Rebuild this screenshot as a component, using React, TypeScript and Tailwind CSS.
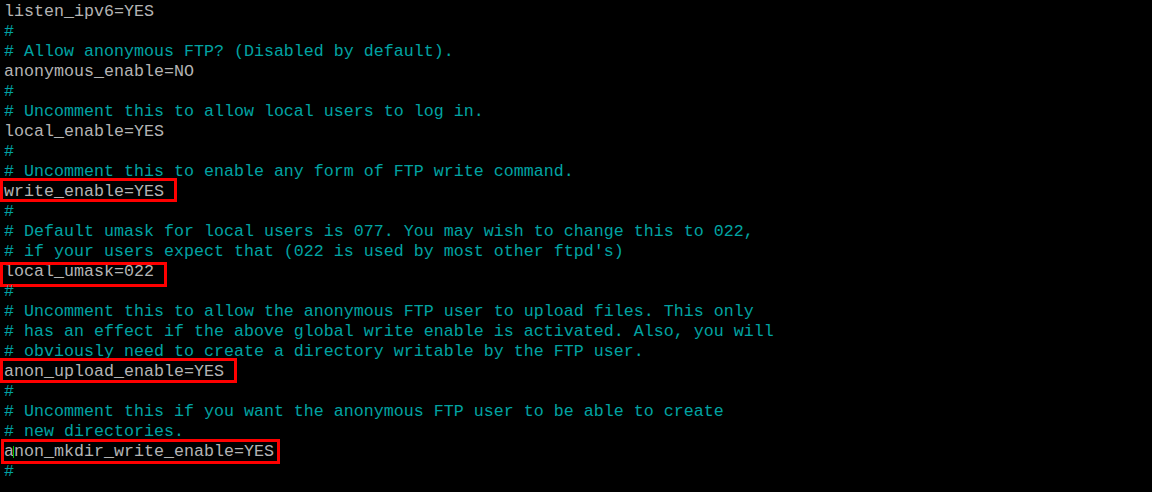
import React from "react";

type Line = {
  text: string;
  box?: { top: number; left: number; width: number; height: number };
  cursor?: boolean;
};

const lines: Line[] = [
  { text: "listen_ipv6=YES" },
  { text: "#" },
  { text: "# Allow anonymous FTP? (Disabled by default)." },
  { text: "anonymous_enable=NO" },
  { text: "#" },
  { text: "# Uncomment this to allow local users to log in." },
  { text: "local_enable=YES" },
  { text: "#" },
  { text: "# Uncomment this to enable any form of FTP write command." },
  { text: "write_enable=YES", box: { top: -2, left: 0, width: 177, height: 24 } },
  { text: "#" },
  { text: "# Default umask for local users is 077. You may wish to change this to 022," },
  { text: "# if your users expect that (022 is used by most other ftpd's)" },
  { text: "local_umask=022", box: { top: 2, left: 0, width: 167, height: 25 } },
  { text: "#" },
  { text: "# Uncomment this to allow the anonymous FTP user to upload files. This only" },
  { text: "# has an effect if the above global write enable is activated. Also, you will" },
  { text: "# obviously need to create a directory writable by the FTP user." },
  { text: "anon_upload_enable=YES", box: { top: -2, left: 0, width: 237, height: 25 } },
  { text: "#" },
  { text: "# Uncomment this if you want the anonymous FTP user to be able to create" },
  { text: "# new directories." },
  { text: "anon_mkdir_write_enable=YES", box: { top: -1, left: 1, width: 279, height: 25 }, cursor: true },
  { text: "#" },
];

export default function App() {
  return (
    <div className="w-[1152px] h-[492px] bg-black overflow-hidden pl-[4px] font-['Liberation_Mono',monospace] text-[16.67px] leading-[20px] whitespace-pre">
      {lines.map((l, i) => {
        const comment = l.text.startsWith("#");
        return (
          <div
            key={i}
            className={`relative h-[20px] ${comment ? "text-[#00a3a3]" : "text-[#b4b4b4]"}`}
          >
            <span className="relative top-[2px]">{l.text}</span>
            {l.box && (
              <div
                className="absolute border-[3px] border-[#ff0000] pointer-events-none"
                style={{
                  top: l.box.top,
                  left: l.box.left - 4,
                  width: l.box.width,
                  height: l.box.height,
                }}
              />
            )}
            {l.cursor && (
              <div className="absolute left-[9px] top-[6px] w-[1px] h-[12px] bg-[#00c000]" />
            )}
          </div>
        );
      })}
    </div>
  );
}
